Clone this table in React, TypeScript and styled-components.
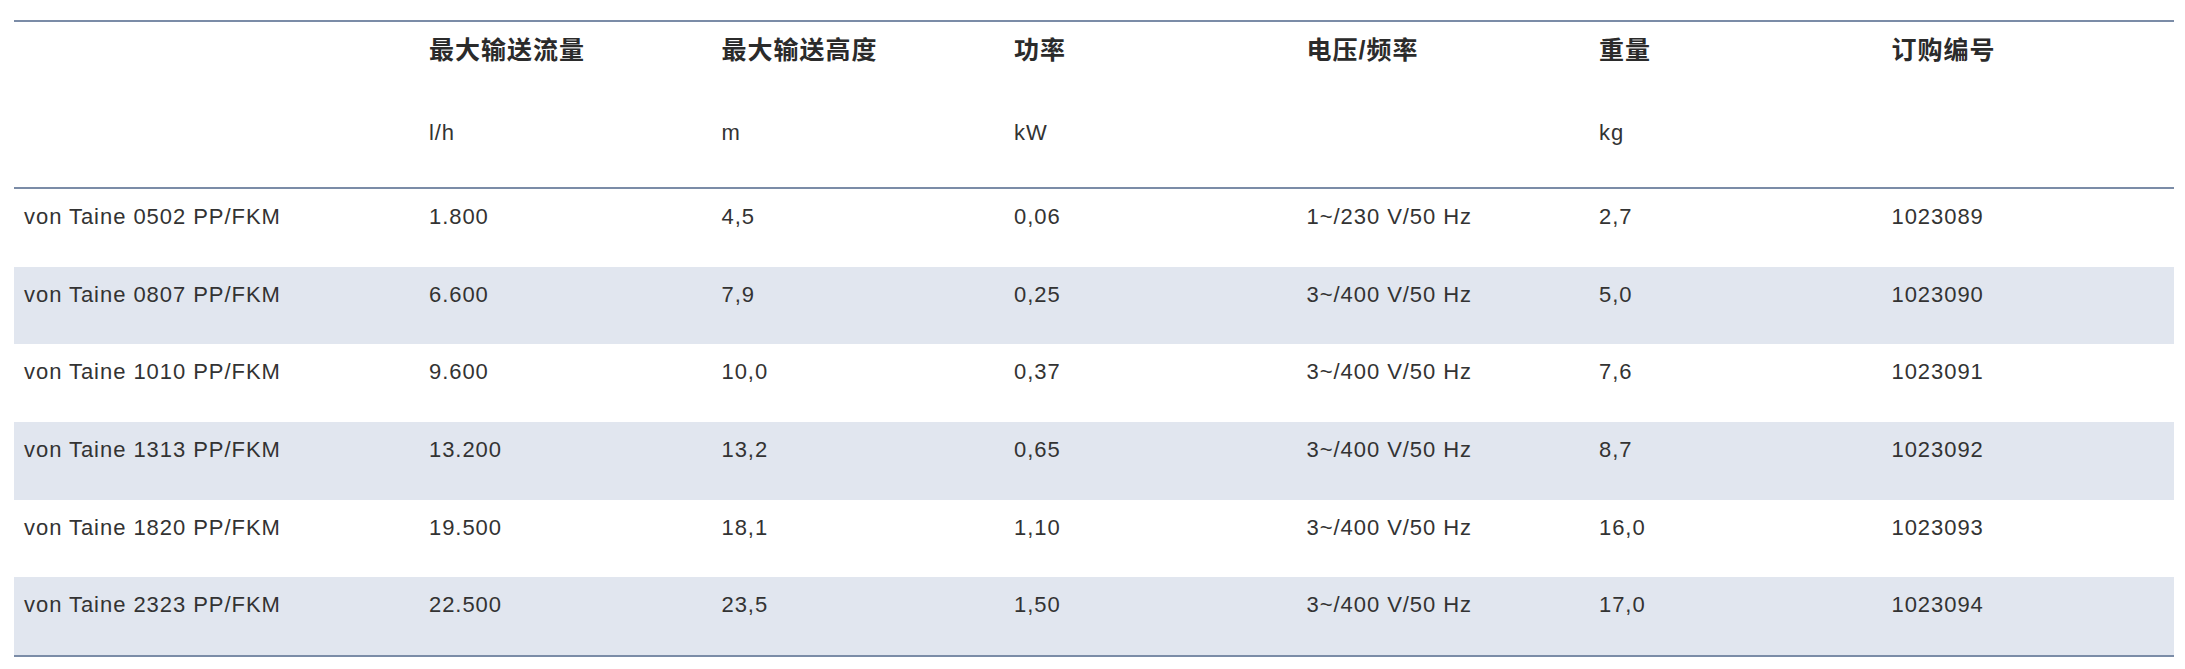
import styled, { createGlobalStyle } from "styled-components";

// 全局样式
const GlobalStyle = createGlobalStyle`
  html, body {
    margin: 0;
    padding: 0;
    background: #ffffff;
  }
  body {
    font-family: "Liberation Sans", "Noto Sans CJK SC", sans-serif;
    color: #333333;
  }
`;

type Pump = {
  name: string;
  flow: string;
  height: string;
  power: string;
  voltage: string;
  weight: string;
  order: string;
};

const headers = [
  { title: "", unit: "" },
  { title: "最大输送流量", unit: "l/h" },
  { title: "最大输送高度", unit: "m" },
  { title: "功率", unit: "kW" },
  { title: "电压/频率", unit: "" },
  { title: "重量", unit: "kg" },
  { title: "订购编号", unit: "" },
];

const pumps: Pump[] = [
  { name: "von Taine 0502 PP/FKM", flow: "1.800", height: "4,5", power: "0,06", voltage: "1~/230 V/50 Hz", weight: "2,7", order: "1023089" },
  { name: "von Taine 0807 PP/FKM", flow: "6.600", height: "7,9", power: "0,25", voltage: "3~/400 V/50 Hz", weight: "5,0", order: "1023090" },
  { name: "von Taine 1010 PP/FKM", flow: "9.600", height: "10,0", power: "0,37", voltage: "3~/400 V/50 Hz", weight: "7,6", order: "1023091" },
  { name: "von Taine 1313 PP/FKM", flow: "13.200", height: "13,2", power: "0,65", voltage: "3~/400 V/50 Hz", weight: "8,7", order: "1023092" },
  { name: "von Taine 1820 PP/FKM", flow: "19.500", height: "18,1", power: "1,10", voltage: "3~/400 V/50 Hz", weight: "16,0", order: "1023093" },
  { name: "von Taine 2323 PP/FKM", flow: "22.500", height: "23,5", power: "1,50", voltage: "3~/400 V/50 Hz", weight: "17,0", order: "1023094" },
];

export default function App() {
  return (
    <>
      <GlobalStyle />
      <Page>
        <Table>
          <Head>
            <TitleRow>
              {headers.map((h, i) => (
                <TitleCell key={i}>{h.title}</TitleCell>
              ))}
            </TitleRow>
            <UnitRow>
              {headers.map((h, i) => (
                <UnitCell key={i}>{h.unit}</UnitCell>
              ))}
            </UnitRow>
          </Head>
          <Body>
            {pumps.map((p, i) => (
              <DataRow key={p.order} $striped={i % 2 === 1}>
                <Cell>{p.name}</Cell>
                <Cell>{p.flow}</Cell>
                <Cell>{p.height}</Cell>
                <Cell>{p.power}</Cell>
                <Cell>{p.voltage}</Cell>
                <Cell>{p.weight}</Cell>
                <Cell>{p.order}</Cell>
              </DataRow>
            ))}
          </Body>
        </Table>
      </Page>
    </>
  );
}

const Page = styled.div`
  padding: 20px 11px 12px 14px;
`;

const Table = styled.div`
  width: 2160px;
  border-top: 2px solid #7b8ca7;
  border-bottom: 2px solid #7b8ca7;
`;

// 表头
const Head = styled.div`
  border-bottom: 2px solid #7b8ca7;
`;

const Row = styled.div`
  display: grid;
  grid-template-columns: 405px repeat(6, 1fr);
`;

const TitleRow = styled(Row)`
  height: 96px;
`;

const TitleCell = styled.div`
  padding: 10px 10px 0;
  font-size: 25px;
  line-height: 36px;
  font-weight: 700;
  letter-spacing: 1px;
  color: #2b2b2b;
`;

const UnitRow = styled(Row)`
  height: 69px;
`;

const UnitCell = styled.div`
  padding: 0 10px;
  font-size: 22px;
  line-height: 30px;
  letter-spacing: 0.9px;
`;

// 数据
const Body = styled.div`
  display: flex;
  flex-direction: column;
`;

const DataRow = styled(Row)<{ $striped: boolean }>`
  height: 77.67px;
  background: ${(p) => (p.$striped ? "#e1e6ef" : "transparent")};
`;

const Cell = styled.div`
  padding: 13px 10px 0;
  font-size: 22px;
  line-height: 30px;
  letter-spacing: 0.95px;
  color: #333333;
`;
